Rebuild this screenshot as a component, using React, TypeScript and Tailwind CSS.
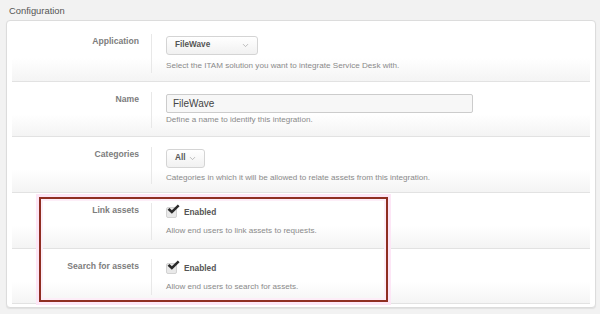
import { ChevronDown } from 'lucide-react';
import type { ReactNode } from 'react';

const Row = ({
  label,
  height,
  helpGap,
  help,
  children,
}: {
  label: string;
  height: string;
  helpGap: string;
  help: string;
  children: ReactNode;
}) => (
  <div className={`flex ${height} border-b border-[#e2e2e2] bg-gradient-to-b from-white from-60% to-[#f4f4f4]`}>
    <div className="w-[127px] shrink-0 pt-[12px] text-right text-[8.6px] leading-[11px] font-bold text-[#7d7d7d]">
      {label}
    </div>
    <div className="mt-[10px] mb-[8px] ml-[12px] flex-1 border-l border-[#e8e8e8] pt-[2px] pl-[14px]">
      {children}
      <div className={`${helpGap} text-[8.1px] leading-[12px] text-[#8a8a8a]`}>{help}</div>
    </div>
  </div>
);

const Select = ({ value, width }: { value: string; width: string }) => (
  <div
    className={`flex h-[19px] ${width} items-center justify-between rounded-[3px] border border-[#d4d4d4] bg-gradient-to-b from-white to-[#f1f1f1] pr-[7px] pl-[8px]`}
  >
    <span className="text-[8.2px] font-bold text-[#555]">{value}</span>
    <ChevronDown size={9} strokeWidth={2} className="text-[#a8a8a8]" />
  </div>
);

const Check = () => (
  <div className="flex h-[15px] items-center gap-[7px]">
    <div className="relative h-[11px] w-[11px] rounded-[2px] border border-[#d2d2d2] bg-[#e9e9e9]">
      <svg viewBox="0 0 12 10" className="absolute top-[-4px] left-[0px] h-[11px] w-[13px]">
        <path d="M0.5 5.2 L2.3 3.5 L4.5 5.6 L10 0.3 L11.6 1.9 L4.5 9 Z" fill="#2b2b2b" />
      </svg>
    </div>
    <span className="text-[8.3px] font-bold text-[#555]">Enabled</span>
  </div>
);

export default function App() {
  return (
    <div className="relative h-[314px] w-[600px] overflow-hidden bg-[#f2f2f2] font-['Liberation_Sans',Arial,sans-serif]">
      <div className="h-[20px] pt-[5px] pl-[9px] text-[9.4px] leading-[11px] text-[#555]">
        Configuration
      </div>
      <div className="mr-[4px] ml-[6px] rounded-[4px] border border-[#dcdcdc] bg-white px-[5px] pt-[3px] pb-[3px] shadow-[0_1px_1px_#e0e0e0]">
        <Row
          label="Application"
          height="h-[58px]"
          helpGap="mt-[5px]"
          help="Select the ITAM solution you want to integrate Service Desk with."
        >
          <Select value="FileWave" width="w-[92px]" />
        </Row>
        <Row label="Name" height="h-[55px]" helpGap="mt-[1px]" help="Define a name to identify this integration.">
          <div className="flex h-[19px] w-[307px] items-center rounded-[2px] border border-[#cccccc] bg-[#f7f7f7] pl-[6px] text-[10px] text-[#444]">
            FileWave
          </div>
        </Row>
        <Row
          label="Categories"
          height="h-[56px]"
          helpGap="mt-[4px]"
          help="Categories in which it will be allowed to relate assets from this integration."
        >
          <Select value="All" width="w-[39px]" />
        </Row>
        <Row
          label="Link assets"
          height="h-[56px]"
          helpGap="mt-[5px]"
          help="Allow end users to link assets to requests."
        >
          <Check />
        </Row>
        <Row
          label="Search for assets"
          height="h-[55px]"
          helpGap="mt-[5px]"
          help="Allow end users to search for assets."
        >
          <Check />
        </Row>
      </div>
      <div className="pointer-events-none absolute top-[197px] left-[39px] h-[105px] w-[349px] border-2 border-[#8f2e22] shadow-[0_0_0_3px_#fde6f6,inset_0_0_0_2px_#fdeef8]" />
    </div>
  );
}
